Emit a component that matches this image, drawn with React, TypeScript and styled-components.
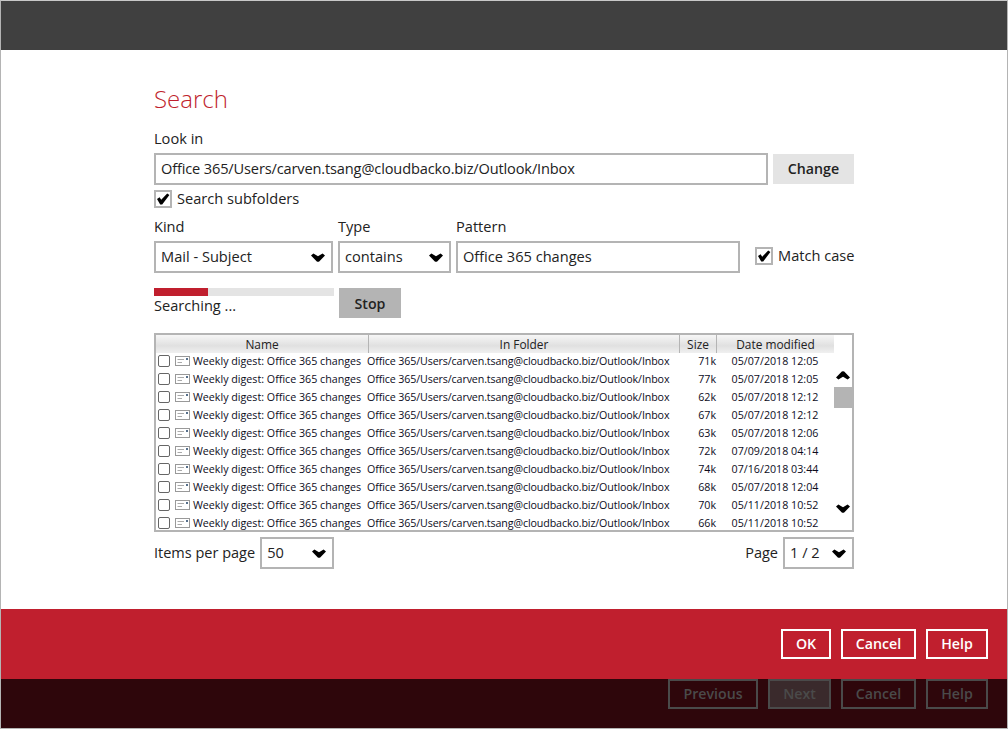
import React from 'react'
import styled, { createGlobalStyle } from 'styled-components'

const GlobalStyle = createGlobalStyle`
  html, body {
    margin: 0;
    padding: 0;
    background: #fff;
  }
  * {
    box-sizing: border-box;
  }
  body {
    font-family: 'Open Sans', 'Liberation Sans', sans-serif;
    font-size: 14.6px;
    color: #222;
  }
`

const Frame = styled.div`
  width: 1008px;
  height: 729px;
  display: flex;
  flex-direction: column;
  border: 1px solid #b4b4b4;
  border-top-color: #c8c8c8;
  overflow: hidden;
`

const TopBar = styled.div`
  height: 49px;
  flex: none;
  background: #404040;
`

const Content = styled.div`
  flex: 1;
  padding: 29px 153px 0;
`

const Title = styled.h1`
  margin: 0;
  height: 40px;
  font-size: 24px;
  line-height: 40px;
  font-weight: 300;
  color: #c01f2e;
`

const FieldLabel = styled.div`
  height: 20px;
  line-height: 18px;
  margin-top: 10px;
`

const LookRow = styled.div`
  display: flex;
  gap: 5px;
  margin-top: 4px;
`

const TextBox = styled.div<{ $width: number }>`
  width: ${p => p.$width}px;
  height: 32px;
  padding: 0 5px;
  line-height: 26px;
  border: 2px solid #b4b4b4;
  background: #fff;
  white-space: nowrap;
`

const PathBox = styled(TextBox)`
  letter-spacing: -0.15px;
`

const ChangeButton = styled.button`
  width: 81px;
  height: 30px;
  margin-top: 1px;
  padding: 0 0 2px;
  border: 0;
  background: #e4e4e4;
  color: #222;
  font: 600 14.2px 'Open Sans', sans-serif;
`

const CheckLine = styled.label`
  display: flex;
  align-items: flex-start;
  gap: 5px;
  height: 18px;
  line-height: 16px;
`

const SubfolderLine = styled(CheckLine)`
  margin-top: 5px;
`

const CheckBox = styled.span`
  width: 18px;
  height: 18px;
  flex: none;
  display: flex;
  align-items: center;
  justify-content: center;
  border: 2px solid #b4b4b4;
  background: #fff;
`

const FilterRow = styled.div`
  display: flex;
  gap: 5px;
  margin-top: 9px;
`

const FilterField = styled.div<{ $width: number }>`
  width: ${p => p.$width}px;
`

const FilterLabel = styled.div`
  height: 20px;
  line-height: 18px;
  margin-bottom: 4px;
`

const MatchCase = styled(CheckLine)`
  margin: 30px 0 0 10px;
  white-space: nowrap;
`

const SelectBox = styled.div<{ $width: number }>`
  width: ${p => p.$width}px;
  height: 32px;
  flex: none;
  display: flex;
  align-items: center;
  justify-content: space-between;
  padding: 0 6px 0 5px;
  border: 2px solid #b4b4b4;
  background: #fff;
  white-space: nowrap;
`

const SelectText = styled.span`
  margin-top: -2px;
`

const ProgressRow = styled.div`
  display: flex;
  gap: 5px;
  margin-top: 15px;
`

const ProgressColumn = styled.div`
  width: 180px;
`

const ProgressTrack = styled.div`
  height: 8px;
  background: #e4e4e4;
`

const ProgressFill = styled.div`
  height: 100%;
  background: #c01f2e;
`

const StatusText = styled.div`
  height: 20px;
  line-height: 18px;
`

const StopButton = styled.button`
  width: 62px;
  height: 30px;
  padding: 0;
  border: 0;
  background: #b4b4b4;
  color: #222;
  font: 600 14.2px 'Open Sans', sans-serif;
`

const ResultPanel = styled.div`
  height: 199px;
  margin-top: 15px;
  display: flex;
  border: 2px solid #b4b4b4;
  background: #fff;
  overflow: hidden;
`

const ResultTable = styled.div`
  width: 678px;
  flex: none;
`

const HeaderRow = styled.div`
  display: grid;
  grid-template-columns: 213px 311px 37px 117px;
  height: 18px;
  font-size: 11.9px;
  background: linear-gradient(#f6f6f6, #e0e0e0 60%, #f0f0f0);
  color: #222;
`

const HeaderCell = styled.div`
  text-align: center;
  line-height: 18px;
  border-right: 1px solid #b4b4b4;
  &:last-child {
    border-right: 0;
  }
`

const Row = styled.div`
  display: grid;
  grid-template-columns: 211px 313px 36px 118px;
  height: 18px;
  font-size: 10.7px;
  line-height: 16px;
  white-space: nowrap;
  color: #0c0c1c;
`

const NameCell = styled.div`
  display: flex;
  align-items: flex-start;
  padding-left: 2px;
`

const RowCheck = styled.span`
  width: 12px;
  height: 12px;
  flex: none;
  margin: 2px 5px 0 0;
  border: 1px solid #666;
  border-radius: 2px;
`

const MailIcon = styled.svg`
  flex: none;
  margin: 3px 3px 0 0;
`

const FolderCell = styled.div`
  overflow: hidden;
  letter-spacing: -0.12px;
`

const SizeCell = styled.div`
  text-align: right;
`

const DateCell = styled.div`
  text-align: center;
`

const ScrollBar = styled.div`
  width: 18px;
  flex: none;
  display: flex;
  flex-direction: column;
  align-items: center;
`

const ScrollThumb = styled.div`
  width: 18px;
  height: 21px;
  margin-top: 7px;
  background: #b4b4b4;
`

const PagerRow = styled.div`
  display: flex;
  align-items: center;
  justify-content: space-between;
  margin-top: 5px;
`

const PagerGroup = styled.div`
  display: flex;
  align-items: center;
  gap: 5px;
`

const PagerLabel = styled.span`
  margin-top: -2px;
  font-size: 14.5px;
`

const RedBar = styled.div`
  height: 70px;
  flex: none;
  display: flex;
  justify-content: flex-end;
  gap: 10px;
  padding: 20px 19px 0 0;
  background: #c01f2e;
`

const DarkBar = styled.div`
  height: 49px;
  flex: none;
  display: flex;
  justify-content: flex-end;
  gap: 10px;
  padding: 0 19px 0 0;
  background: #2e060b;
`

const FooterButton = styled.button<{ $width: number; $filled?: boolean; $dim?: boolean }>`
  width: ${p => p.$width}px;
  height: 30px;
  padding: 0 0 2px;
  border: 2px solid ${p => (p.$dim ? '#4a4a4a' : '#fff')};
  background: ${p => (p.$filled ? '#3a2a2c' : 'transparent')};
  color: ${p => (p.$dim ? '#4a4a4a' : '#fff')};
  font: 600 14.2px 'Open Sans', sans-serif;
`

const ChevronSvg = styled.svg<{ $top?: number }>`
  flex: none;
  margin-top: ${p => p.$top ?? 0}px;
`

const Chevron = ({ up, top }: { up?: boolean; top?: number }) => (
  <ChevronSvg width="14" height="9" viewBox="0 0 14 9" $top={top}>
    <path
      transform={up ? 'rotate(180 7 4.5)' : undefined}
      d="M0 2.6 L2.4 0.4 L7 3.2 L11.6 0.4 L14 2.6 L8.2 8.4 Q7 9.2 5.8 8.4 Z"
      fill="#000"
    />
  </ChevronSvg>
)

const Check = () => (
  <svg width="14" height="12" viewBox="0 0 14 12">
    <path d="M1 6 L3.6 4.2 L5.2 6.8 L11.2 0.4 L13.4 2 L6.2 11.4 L4.2 11.4 Z" fill="#000" />
  </svg>
)

const rows = [
  { size: '71k', date: '05/07/2018 12:05' },
  { size: '77k', date: '05/07/2018 12:05' },
  { size: '62k', date: '05/07/2018 12:12' },
  { size: '67k', date: '05/07/2018 12:12' },
  { size: '63k', date: '05/07/2018 12:06' },
  { size: '72k', date: '07/09/2018 04:14' },
  { size: '74k', date: '07/16/2018 03:44' },
  { size: '68k', date: '05/07/2018 12:04' },
  { size: '70k', date: '05/11/2018 10:52' },
  { size: '66k', date: '05/11/2018 10:52' },
]

const App: React.FC = () => {
  return (
    <Frame>
      <GlobalStyle />
      <TopBar />
      <Content>
        <Title>Search</Title>
        <FieldLabel>Look in</FieldLabel>
        <LookRow>
          <PathBox $width={614}>Office 365/Users/carven.tsang@cloudbacko.biz/Outlook/Inbox</PathBox>
          <ChangeButton>Change</ChangeButton>
        </LookRow>
        <SubfolderLine>
          <CheckBox><Check /></CheckBox>
          Search subfolders
        </SubfolderLine>
        <FilterRow>
          <FilterField $width={179}>
            <FilterLabel>Kind</FilterLabel>
            <SelectBox $width={179}><SelectText>Mail - Subject</SelectText><Chevron /></SelectBox>
          </FilterField>
          <FilterField $width={113}>
            <FilterLabel>Type</FilterLabel>
            <SelectBox $width={113}><SelectText>contains</SelectText><Chevron /></SelectBox>
          </FilterField>
          <FilterField $width={284}>
            <FilterLabel>Pattern</FilterLabel>
            <TextBox $width={284}>Office 365 changes</TextBox>
          </FilterField>
          <MatchCase>
            <CheckBox><Check /></CheckBox>
            Match case
          </MatchCase>
        </FilterRow>
        <ProgressRow>
          <ProgressColumn>
            <ProgressTrack>
              <ProgressFill style={{ width: '30%' }} />
            </ProgressTrack>
            <StatusText>Searching ...</StatusText>
          </ProgressColumn>
          <StopButton>Stop</StopButton>
        </ProgressRow>
        <ResultPanel>
          <ResultTable>
            <HeaderRow>
              <HeaderCell>Name</HeaderCell>
              <HeaderCell>In Folder</HeaderCell>
              <HeaderCell>Size</HeaderCell>
              <HeaderCell>Date modified</HeaderCell>
            </HeaderRow>
            {rows.map((row, i) => (
              <Row key={i}>
                <NameCell>
                  <RowCheck />
                  <MailIcon width="15" height="10" viewBox="0 0 15 10">
                    <rect x="0.5" y="0.5" width="14" height="9" fill="#fff" stroke="#999" />
                    <path d="M2.5 3.5 H9 M2.5 6.5 H7" stroke="#aaa" />
                    <rect x="11" y="2" width="2" height="2" fill="#57708c" />
                  </MailIcon>
                  Weekly digest: Office 365 changes
                </NameCell>
                <FolderCell>Office 365/Users/carven.tsang@cloudbacko.biz/Outlook/Inbox</FolderCell>
                <SizeCell>{row.size}</SizeCell>
                <DateCell>{row.date}</DateCell>
              </Row>
            ))}
          </ResultTable>
          <ScrollBar>
            <Chevron up top={36} />
            <ScrollThumb />
            <Chevron top={96} />
          </ScrollBar>
        </ResultPanel>
        <PagerRow>
          <PagerGroup>
            <PagerLabel>Items per page</PagerLabel>
            <SelectBox $width={74}><SelectText>50</SelectText><Chevron /></SelectBox>
          </PagerGroup>
          <PagerGroup>
            <PagerLabel>Page</PagerLabel>
            <SelectBox $width={71}><SelectText>1 / 2</SelectText><Chevron /></SelectBox>
          </PagerGroup>
        </PagerRow>
      </Content>
      <RedBar>
        <FooterButton $width={50}>OK</FooterButton>
        <FooterButton $width={75}>Cancel</FooterButton>
        <FooterButton $width={62}>Help</FooterButton>
      </RedBar>
      <DarkBar>
        <FooterButton $width={90} $dim>Previous</FooterButton>
        <FooterButton $width={63} $dim $filled>Next</FooterButton>
        <FooterButton $width={75} $dim>Cancel</FooterButton>
        <FooterButton $width={62} $dim>Help</FooterButton>
      </DarkBar>
    </Frame>
  )
}

export default App
